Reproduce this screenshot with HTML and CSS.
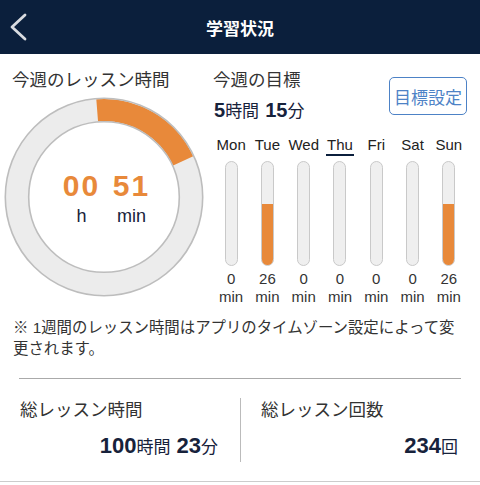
FILE: index.html
```html
<!DOCTYPE html>
<html lang="ja">
<head>
    <meta charset="UTF-8">
    <meta name="viewport" content="width=device-width, initial-scale=1.0">
    <title>学習状況</title>
<link rel="stylesheet" href="styles.css">
</head>
<body>

<header class="topbar">
    <svg class="back" width="22" height="30" viewBox="0 0 22 30">
        <polyline points="17,3 4,15 17,27" fill="none" stroke="#d9dbe0" stroke-width="2.8" stroke-linecap="round" stroke-linejoin="round"/>
    </svg>
    <h1>学習状況</h1>
</header>

<main>
    <section class="week">
        <div class="lesson">
            <h2>今週のレッスン時間</h2>
            <div class="ring">
                <svg width="200" height="200" viewBox="0 0 200 200">
                    <circle cx="100" cy="100" r="87" fill="none" stroke="#ececec" stroke-width="23"/>
                    <path d="M93.17 13.27 A87 87 0 0 1 179.17 63.92" fill="none" stroke="#e8893a" stroke-width="22"/>
                    <circle cx="100" cy="100" r="98.7" fill="none" stroke="#bdbdbd" stroke-width="1.6"/>
                    <circle cx="100" cy="100" r="75.3" fill="none" stroke="#bdbdbd" stroke-width="1.6"/>
                </svg>
                <div class="ring-time">
                    <span class="num">00</span>
                    <span class="num">51</span>
                    <span class="unit">h</span>
                    <span class="unit">min</span>
                </div>
            </div>
        </div>

        <div class="goal">
            <div class="goal-head">
                <div>
                    <h2>今週の目標</h2>
                    <p class="goal-value"><b>5</b>時間<b class="gap">15</b>分</p>
                </div>
                <button type="button">目標設定</button>
            </div>

            <div class="days">
                <div class="day">
                    <span class="day-name">Mon</span>
                    <div class="bar"><div class="fill" style="height: 0%"></div></div>
                    <span class="day-min">0<br>min</span>
                </div>
                <div class="day">
                    <span class="day-name">Tue</span>
                    <div class="bar"><div class="fill" style="height: 59%"></div></div>
                    <span class="day-min">26<br>min</span>
                </div>
                <div class="day">
                    <span class="day-name">Wed</span>
                    <div class="bar"><div class="fill" style="height: 0%"></div></div>
                    <span class="day-min">0<br>min</span>
                </div>
                <div class="day">
                    <span class="day-name today">Thu</span>
                    <div class="bar"><div class="fill" style="height: 0%"></div></div>
                    <span class="day-min">0<br>min</span>
                </div>
                <div class="day">
                    <span class="day-name">Fri</span>
                    <div class="bar"><div class="fill" style="height: 0%"></div></div>
                    <span class="day-min">0<br>min</span>
                </div>
                <div class="day">
                    <span class="day-name">Sat</span>
                    <div class="bar"><div class="fill" style="height: 0%"></div></div>
                    <span class="day-min">0<br>min</span>
                </div>
                <div class="day">
                    <span class="day-name">Sun</span>
                    <div class="bar"><div class="fill" style="height: 59%"></div></div>
                    <span class="day-min">26<br>min</span>
                </div>
            </div>
        </div>
    </section>

    <p class="note">※ 1週間のレッスン時間はアプリのタイムゾーン設定によって変更されます。</p>

    <hr class="divider">

    <section class="totals">
        <div class="total">
            <h3>総レッスン時間</h3>
            <p class="total-value"><b>100</b>時間<b class="gap">23</b>分</p>
        </div>
        <div class="total second">
            <h3>総レッスン回数</h3>
            <p class="total-value"><b>234</b>回</p>
        </div>
    </section>
</main>

</body>
</html>
```

FILE: styles.css
```css
body {
    margin: 0;
    font-family: "Liberation Sans", "Noto Sans CJK JP", sans-serif;
    background-color: white;
    color: #333;
}

.topbar {
    height: 54px;
    background-color: #0b1f3c;
    display: grid;
    grid-template-columns: 54px 1fr 54px;
    align-items: center;
}

.back {
    margin-left: 8px;
}

.topbar h1 {
    margin: 0;
    font-size: 17px;
    font-weight: bold;
    color: white;
    text-align: center;
}

.week {
    display: flex;
    padding-top: 14px;
}

h2 {
    margin: 0;
    font-size: 17.5px;
    font-weight: normal;
    line-height: 24px;
    color: #333;
}

.lesson {
    width: 210px;
}

.lesson h2 {
    padding-left: 12px;
}

.ring {
    display: grid;
    width: 200px;
    height: 200px;
    margin: 5px 0 0 4px;
}

.ring svg,
.ring-time {
    grid-area: 1 / 1;
}

.ring-time {
    display: grid;
    grid-template-columns: 50px 50px;
    justify-content: center;
    align-content: start;
    padding: 73px 0 0 5px;
    text-align: center;
}

.num {
    font-size: 30px;
    font-weight: bold;
    line-height: 32px;
    letter-spacing: 2px;
    color: #e8893a;
}

.unit {
    margin-top: 3px;
    font-size: 18px;
    line-height: 22px;
    color: #17223b;
}

.goal {
    width: 254px;
    margin-left: 3px;
}

.goal-head {
    display: flex;
    justify-content: space-between;
    align-items: flex-start;
}

.goal-value {
    margin: 6px 0 0 1px;
    font-size: 17px;
    line-height: 24px;
    color: #17223b;
}

.goal-value b {
    font-size: 20px;
}

b.gap {
    margin-left: 6px;
}

button {
    width: 78px;
    height: 38px;
    margin-top: 9px;
    padding: 0;
    background-color: white;
    border: 1.5px solid #4d82c6;
    border-radius: 5px;
    color: #4d82c6;
    font-family: "Noto Sans CJK JP", sans-serif;
    font-size: 17px;
    cursor: pointer;
}

.days {
    display: grid;
    grid-template-columns: repeat(7, 1fr);
    margin-top: 12px;
}

.day {
    display: flex;
    flex-direction: column;
    align-items: center;
}

.day-name {
    font-size: 15px;
    line-height: 18px;
    color: #222;
    border-bottom: 2px solid transparent;
}

.day-name.today {
    border-bottom-color: #0b1f3c;
    padding: 0 1px;
}

.bar {
    width: 13px;
    height: 105px;
    margin-top: 5px;
    box-sizing: border-box;
    border: 1px solid #c9c9c9;
    border-radius: 7px;
    background-color: #efefef;
    overflow: hidden;
    display: flex;
    flex-direction: column;
    justify-content: flex-end;
}

.fill {
    background-color: #e8893a;
}

.day-min {
    margin-top: 4px;
    font-size: 15px;
    line-height: 18px;
    text-align: center;
    color: #333;
}

.note {
    width: 450px;
    margin: 11px 0 0;
    padding-left: 13px;
    font-size: 15.4px;
    line-height: 21px;
    color: #333;
}

.divider {
    margin: 19px 19px 0;
    border: none;
    border-top: 1px solid #aaa;
}

.totals {
    display: flex;
    padding: 19px 0;
    border-bottom: 1px solid #ccc;
}

.total {
    width: 240px;
    box-sizing: border-box;
    padding: 0 22px 0 20px;
}

.total.second {
    border-left: 1.5px solid #bbb;
}

h3 {
    margin: 0;
    font-size: 17.5px;
    font-weight: normal;
    line-height: 24px;
    color: #333;
}

.total-value {
    margin: 10px 0 0;
    font-size: 17px;
    line-height: 28px;
    text-align: right;
    color: #17223b;
}

.total-value b {
    font-size: 22px;
}
```
